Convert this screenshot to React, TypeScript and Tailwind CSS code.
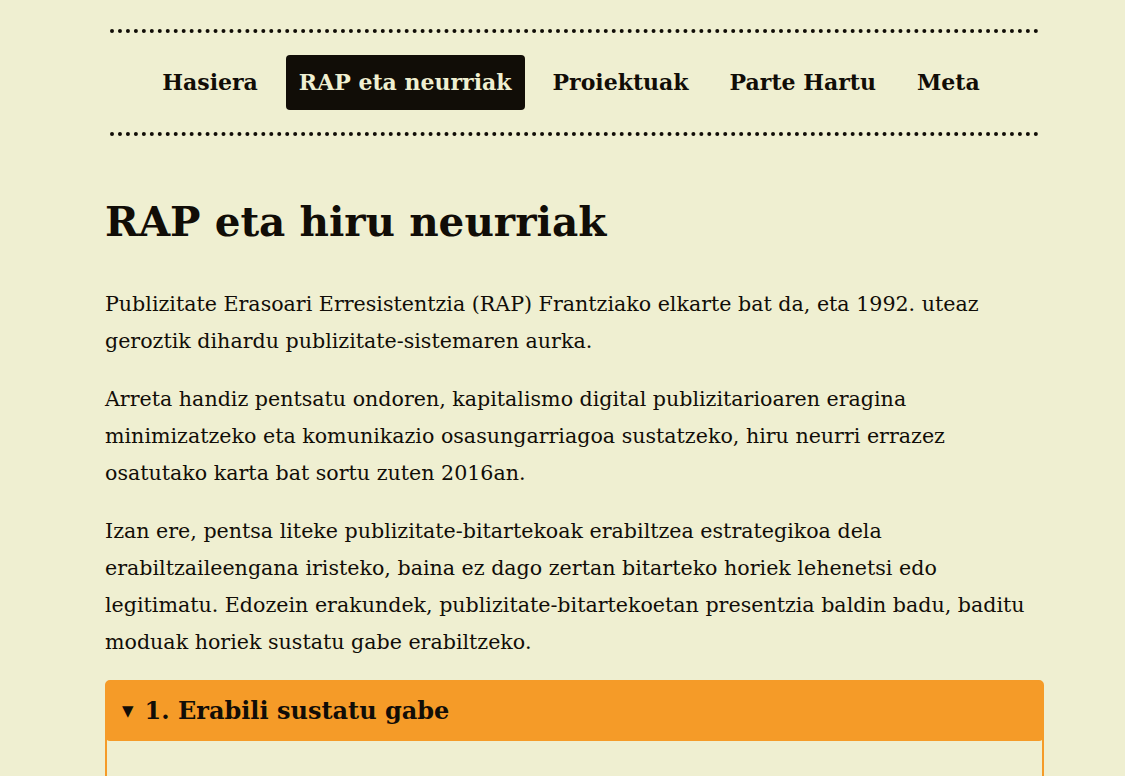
import React from 'react';

const navItems = [
  { label: 'Hasiera', active: false },
  { label: 'RAP eta neurriak', active: true },
  { label: 'Proiektuak', active: false },
  { label: 'Parte Hartu', active: false },
  { label: 'Meta', active: false },
];

// lines kept as in the original layout
const paragraphs = [
  [
    'Publizitate Erasoari Erresistentzia (RAP) Frantziako elkarte bat da, eta 1992. uteaz',
    'geroztik dihardu publizitate-sistemaren aurka.',
  ],
  [
    'Arreta handiz pentsatu ondoren, kapitalismo digital publizitarioaren eragina',
    'minimizatzeko eta komunikazio osasungarriagoa sustatzeko, hiru neurri errazez',
    'osatutako karta bat sortu zuten 2016an.',
  ],
  [
    'Izan ere, pentsa liteke publizitate-bitartekoak erabiltzea estrategikoa dela',
    'erabiltzaileengana iristeko, baina ez dago zertan bitarteko horiek lehenetsi edo',
    'legitimatu. Edozein erakundek, publizitate-bitartekoetan presentzia baldin badu, baditu',
    'moduak horiek sustatu gabe erabiltzeko.',
  ],
];

export default function App() {
  return (
    <div className="min-h-screen bg-[#efefd1] text-[#110d07] font-['DejaVu_Serif',serif]">
      <div className="ml-[105px] w-[939px] pt-[29px]">
        {/* Navigation */}
        <nav className="mx-[5px] border-y-4 border-dotted border-[#110d07] py-[22px]">
          <ul className="flex items-center justify-center gap-[15px] pr-[7px]">
            {navItems.map((item) => (
              <li key={item.label}>
                <a
                  href="#"
                  className={
                    item.active
                      ? 'block rounded-[4px] bg-[#110d07] px-[13px] py-[12px] text-[22px] leading-[31px] font-bold text-[#efefd1]'
                      : 'block px-[13px] py-[12px] text-[22px] leading-[31px] font-bold'
                  }
                >
                  {item.label}
                </a>
              </li>
            ))}
          </ul>
        </nav>

        <main>
          <h1 className="mt-[60px] mb-[38px] text-[40.5px] leading-[52px] font-bold">RAP eta hiru neurriak</h1>

          {paragraphs.map((lines, i) => (
            <p key={i} className="mb-[21px] whitespace-nowrap text-[20.6px] leading-[37px]">
              {lines.map((line, j) => (
                <React.Fragment key={j}>
                  {line}
                  {j < lines.length - 1 && <br />}
                </React.Fragment>
              ))}
            </p>
          ))}

          <section className="-mt-[2px] rounded-[5px] border-2 border-[#f59b28]">
            <div className="-mx-[1px] -mt-[1px] flex items-center gap-[11px] rounded-[4px] bg-[#f59b28] px-[16px] py-[12px]">
              <span className="text-[15px] leading-none">▼</span>
              <h2 className="text-[24px] leading-[36px] font-bold">1. Erabili sustatu gabe</h2>
            </div>
            <div className="h-[160px]" />
          </section>
        </main>
      </div>
    </div>
  );
}
